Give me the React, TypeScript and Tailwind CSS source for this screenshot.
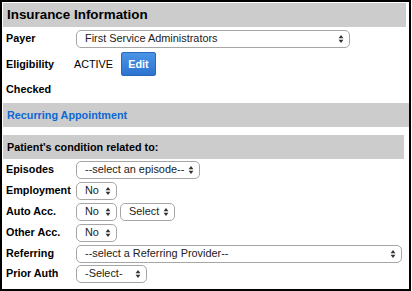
import type { ReactNode } from 'react'

function Arrows() {
  return (
    <svg width="6" height="10" viewBox="0 0 6 10" className="pointer-events-none absolute right-[6px] top-1/2 -translate-y-1/2">
      <path d="M3 1 L5.4 4.2 H0.6 Z" fill="#333" />
      <path d="M3 9 L5.4 5.8 H0.6 Z" fill="#333" />
    </svg>
  )
}

function Select(props: { value: string; width: string }) {
  return (
    <div className={`relative h-[18px] shrink-0 ${props.width}`}>
      <select
        defaultValue={props.value}
        className="block h-full w-full appearance-none rounded-[5px] border border-[#a6a6a6] bg-white pl-[8px] pr-[14px] text-[10.9px] leading-none text-[#222] outline-none"
      >
        <option>{props.value}</option>
      </select>
      <Arrows />
    </div>
  )
}

function Row(props: { label: string; h: string; children?: ReactNode }) {
  return (
    <div className={`flex items-center pl-[4px] ${props.h}`}>
      <div className="w-[70px] shrink-0 text-[10.8px] font-bold text-black">{props.label}</div>
      <div className="flex items-center gap-[3px]">{props.children}</div>
    </div>
  )
}

function Header(props: { children: ReactNode; className: string }) {
  return (
    <div className={`flex h-[24px] items-center bg-[#cccccc] pl-[4px] font-bold ${props.className}`}>
      {props.children}
    </div>
  )
}

export default function App() {
  return (
    <div className="h-[291px] w-[412px] bg-white" style={{ fontFamily: '"Liberation Sans", Arial, sans-serif' }}>
      <div className="flex h-[291px] w-[411px] flex-col border-2 border-black">
        <Header className="ml-px mr-[3px] mt-px text-[13.4px] text-black">Insurance Information</Header>

        <Row label="Payer" h="h-[23px]">
          <Select value="First Service Administrators" width="w-[274px]" />
        </Row>
        <Row label="Eligibility" h="h-[28px]">
          <span className="-ml-[2px] text-[10.8px] text-black">ACTIVE</span>
          <button
            type="button"
            className="ml-[5px] h-[24px] w-[35px] rounded-[2px] border border-[#2a68b8] bg-gradient-to-b from-[#4b94e6] to-[#2d74d1] text-[10.8px] font-bold text-white"
          >
            Edit
          </button>
        </Row>
        <Row label="Checked" h="h-[22px]" />

        <Header className="ml-px mt-[3px] text-[10.8px] text-[#0b68d4]">Recurring Appointment</Header>
        <Header className="ml-px mr-[5px] mt-[8px] text-[10.8px] text-black">Patient&apos;s condition related to:</Header>

        <Row label="Episodes" h="h-[21px]">
          <Select value="--select an episode--" width="w-[124px]" />
        </Row>
        <Row label="Employment" h="h-[21px]">
          <Select value="No" width="w-[41px]" />
        </Row>
        <Row label="Auto Acc." h="h-[21px]">
          <Select value="No" width="w-[41px]" />
          <Select value="Select" width="w-[55px]" />
        </Row>
        <Row label="Other Acc." h="h-[21px]">
          <Select value="No" width="w-[41px]" />
        </Row>
        <Row label="Referring" h="h-[21px]">
          <Select value="--select a Referring Provider--" width="w-[326px]" />
        </Row>
        <Row label="Prior Auth" h="h-[19px]">
          <Select value="-Select-" width="w-[71px]" />
        </Row>
      </div>
    </div>
  )
}
